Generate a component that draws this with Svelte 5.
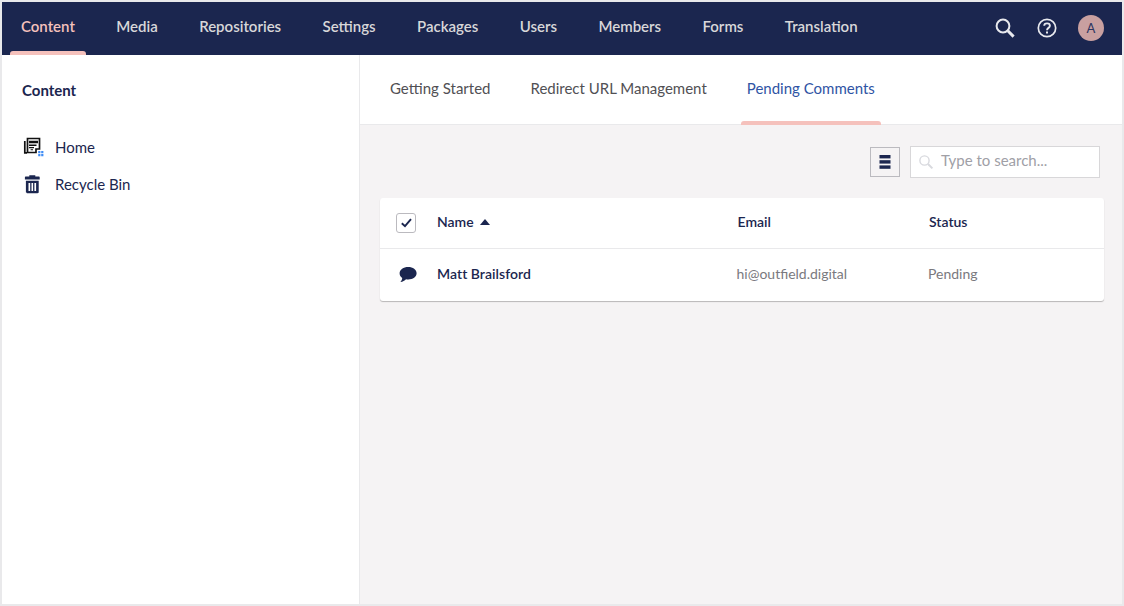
<script>
  const sections = ['Content', 'Media', 'Repositories', 'Settings', 'Packages', 'Users', 'Members', 'Forms', 'Translation'];
  const tabs = ['Getting Started', 'Redirect URL Management', 'Pending Comments'];
</script>

<div class="frame">
  <header class="topbar">
    <nav class="sections">
      {#each sections as s, i}
        <a class="section" class:active={i === 0} href="#top">{s}</a>
      {/each}
    </nav>
    <div class="tools">
      <svg width="22" height="22" viewBox="0 0 22 22" fill="none" stroke="#e8e9ee">
        <circle cx="9" cy="9" r="6.4" stroke-width="2" />
        <path d="M13.8 13.8 L19.6 19.6" stroke-width="3" />
      </svg>
      <svg width="20" height="20" viewBox="0 0 20 20" fill="none" stroke="#e8e9ee">
        <circle cx="10" cy="10" r="8.7" stroke-width="1.7" />
        <path d="M7.2 7.8 C7.2 4.6 12.9 4.6 12.9 7.8 C12.9 10 10 9.8 10 12.2" stroke-width="1.9" />
        <path d="M10 13.6 V15.6" stroke-width="2" />
      </svg>
      <span class="avatar">A</span>
    </div>
  </header>

  <div class="body">
    <aside class="tree">
      <h3>Content</h3>
      <ul>
        <li>
          <svg width="22" height="20" viewBox="0 0 22 20">
            <path d="M5.5 1.5 H17.5 V12 H14 V15.5 H5.5 Z" fill="none" stroke="#111" stroke-width="1.7" />
            <path d="M2.8 4 V15.8 L5 15.8" fill="none" stroke="#111" stroke-width="1.7" />
            <path d="M7 3.8 H16 V6.2 H7 Z M7 7.6 H14.5 V8.9 H7 Z M7 10 H12 V11.2 H7 Z M8.6 12.2 H11 V13.3 H8.6 Z" fill="#111" />
            <path d="M16.2 14 h2.2 v2.2 h-2.2 Z M19.2 14 h2.2 v2.2 h-2.2 Z M16.2 17 h2.2 v2.2 h-2.2 Z M19.2 17 h2.2 v2.2 h-2.2 Z" fill="#3f8cf5" />
          </svg>
          <span>Home</span>
        </li>
        <li>
          <svg width="22" height="20" viewBox="0 0 22 20">
            <path d="M2.9 3.4 C2.9 2.8 3.3 2.6 3.9 2.6 H7.3 V1.2 H13.3 V2.6 H16.7 C17.3 2.6 17.7 2.8 17.7 3.4 V5.6 H2.9 Z" fill="#1b264f" />
            <path fill-rule="evenodd" d="M3.9 6.8 H16.7 V18 C16.7 18.8 16.3 19.2 15.5 19.2 H5.1 C4.3 19.2 3.9 18.8 3.9 18 Z M6.5 9 V17 H8.2 V9 Z M9.5 9 V17 H11.1 V9 Z M12.4 9 V17 H14.1 V9 Z" fill="#1b264f" />
          </svg>
          <span>Recycle Bin</span>
        </li>
      </ul>
    </aside>

    <main class="main">
      <div class="tabs">
        {#each tabs as t, i}
          <a class="tab" class:active={i === 2} href="#top">{t}</a>
        {/each}
      </div>
      <div class="content">
        <div class="toolbar">
          <button class="layout" aria-label="Layout">
            <svg width="12" height="14" viewBox="0 0 12 14" fill="#1b264f">
              <rect x="0.5" y="0" width="11" height="3.4" />
              <rect x="0.5" y="5.2" width="11" height="3.4" />
              <rect x="0.5" y="10.4" width="11" height="3.4" />
            </svg>
          </button>
          <div class="search">
            <svg width="16" height="16" viewBox="0 0 16 16" fill="none" stroke="#d8d9de">
              <circle cx="6.5" cy="6.5" r="4.6" stroke-width="1.4" />
              <path d="M10 10 L14.4 14.4" stroke-width="2" />
            </svg>
            <span>Type to search...</span>
          </div>
        </div>

        <section class="table">
          <div class="row head">
            <span class="c-icon">
              <span class="check">
                <svg width="11" height="10" viewBox="0 0 11 10" fill="none" stroke="#1b264f" stroke-width="1.9">
                  <path d="M0.8 5.2 L4 8.2 L10 1.2" />
                </svg>
              </span>
            </span>
            <span class="c-name">Name <i class="caret"></i></span>
            <span class="c-email">Email</span>
            <span class="c-status">Status</span>
          </div>
          <div class="row item">
            <span class="c-icon">
              <svg width="18" height="17" viewBox="0 0 18 17" fill="#1b264f">
                <path d="M9.2 1 C13.9 1 17.6 3.6 17.6 7.2 C17.6 10.8 13.9 13.4 9.2 13.4 C8.4 13.4 7.7 13.3 7 13.2 C5.7 14.6 3.8 15.7 1.4 16 C2.6 14.8 3.2 13.4 3.2 12 C1.6 10.9 0.6 9.2 0.6 7.2 C0.6 3.6 4.5 1 9.2 1 Z" />
              </svg>
            </span>
            <span class="c-name strong">Matt Brailsford</span>
            <span class="c-email muted">hi@outfield.digital</span>
            <span class="c-status muted">Pending</span>
          </div>
        </section>
      </div>
    </main>
  </div>
</div>

<style>
  :global(body) {
    margin: 0;
    background: #e9e9eb;
  }

  * {
    box-sizing: border-box;
  }

  .frame {
    width: 1124px;
    height: 606px;
    padding: 2px;
    display: flex;
    flex-direction: column;
    font-family: Lato, "Open Sans", sans-serif;
    font-size: 15px;
    color: #1b264f;
    overflow: hidden;
  }

  .topbar {
    height: 53px;
    flex: none;
    background: #1b264f;
    display: flex;
    justify-content: space-between;
  }

  .sections {
    display: flex;
  }

  .section {
    position: relative;
    display: flex;
    align-items: center;
    padding: 0 20.7px 5px;
    color: #d8d7d9;
    font-weight: 600;
    font-size: 15px;
    text-decoration: none;
  }

  .section:first-child {
    padding-left: 19px;
  }

  .section.active {
    color: #f5c1bc;
  }

  .section.active::after {
    content: '';
    position: absolute;
    left: 8px;
    right: 10px;
    bottom: 0;
    height: 4px;
    background: #f5c1bc;
    border-radius: 3px 3px 0 0;
  }

  .tools {
    display: flex;
    align-items: center;
    padding: 0 18px 2px 0;
  }

  .tools svg:first-child {
    margin-right: 21px;
  }

  .avatar {
    margin-left: 21px;
    width: 26px;
    height: 26px;
    border-radius: 50%;
    background: #c9a0a0;
    color: #2d3560;
    font-size: 13px;
    display: flex;
    align-items: center;
    justify-content: center;
  }

  .body {
    flex: 1;
    display: flex;
    min-height: 0;
  }

  .tree {
    width: 358px;
    flex: none;
    background: #fff;
    border-right: 1px solid #e9e9eb;
  }

  .tree h3 {
    margin: 0;
    padding: 26px 0 0 20px;
    font-size: 15px;
    line-height: 18px;
    font-weight: 700;
  }

  .tree ul {
    list-style: none;
    margin: 0;
    padding: 29px 0 0 20px;
  }

  .tree li {
    height: 37.5px;
    display: flex;
    align-items: center;
    gap: 11px;
    font-size: 15px;
  }

  .main {
    flex: 1;
    display: flex;
    flex-direction: column;
    background: #f5f3f4;
    min-width: 0;
  }

  .tabs {
    height: 70px;
    flex: none;
    background: #fff;
    border-bottom: 1px solid #e9e9eb;
    display: flex;
    padding-left: 10px;
  }

  .tab {
    position: relative;
    display: flex;
    align-items: center;
    padding: 0 20px 4px;
    color: #515054;
    font-size: 15px;
    text-decoration: none;
    height: 69px;
  }

  .tab.active {
    color: #2f54a4;
  }

  .tab.active::after {
    content: '';
    position: absolute;
    left: 14px;
    right: 14px;
    bottom: -1px;
    height: 4px;
    background: #f5c1bc;
    border-radius: 3px 3px 0 0;
  }

  .content {
    padding: 21px 18px 0 20px;
  }

  .toolbar {
    display: flex;
    justify-content: flex-end;
    align-items: center;
    gap: 10px;
    padding-right: 4px;
    height: 32px;
  }

  .layout {
    width: 30px;
    height: 30px;
    border: 1px solid #bbbabf;
    background: #f5f3f4;
    display: flex;
    align-items: center;
    justify-content: center;
    padding: 0;
  }

  .search {
    width: 190px;
    height: 32px;
    background: #fff;
    border: 1px solid #d8d7d9;
    display: flex;
    align-items: center;
    gap: 7px;
    padding: 0 0 4px 7px;
    color: #a0a0a6;
    font-size: 15px;
  }

  .search svg {
    margin-top: 3px;
  }

  .table {
    margin-top: 20px;
    background: #fff;
    border-radius: 3px;
    box-shadow: 0 1px 1px rgba(0, 0, 0, 0.25);
  }

  .row {
    display: flex;
    align-items: center;
  }

  .head {
    height: 51px;
    border-bottom: 1px solid #e9e9eb;
    font-size: 14px;
    font-weight: 600;
  }

  .head .c-name,
  .head .c-email,
  .head .c-status {
    padding-bottom: 4px;
  }

  .item {
    height: 52px;
    padding-bottom: 3px;
    font-size: 14px;
  }

  .c-icon {
    width: 57px;
    flex: none;
    padding-left: 16px;
    display: flex;
  }

  .item .c-icon {
    padding-left: 19px;
    padding-top: 2px;
  }

  .check {
    width: 20px;
    height: 20px;
    border: 1px solid #bbbabf;
    border-radius: 3px;
    background: #fff;
    display: flex;
    align-items: center;
    justify-content: center;
  }

  .c-name {
    width: 300.5px;
    flex: none;
  }

  .caret {
    display: inline-block;
    margin-left: 3px;
    vertical-align: 2px;
    border-left: 5px solid transparent;
    border-right: 5px solid transparent;
    border-bottom: 6px solid #1b264f;
  }

  .c-email {
    width: 191.5px;
    flex: none;
  }

  .item .c-email {
    margin-left: -1px;
  }

  .strong {
    font-weight: 600;
    letter-spacing: 0.05px;
  }

  .muted {
    color: #7a797e;
  }
</style>
